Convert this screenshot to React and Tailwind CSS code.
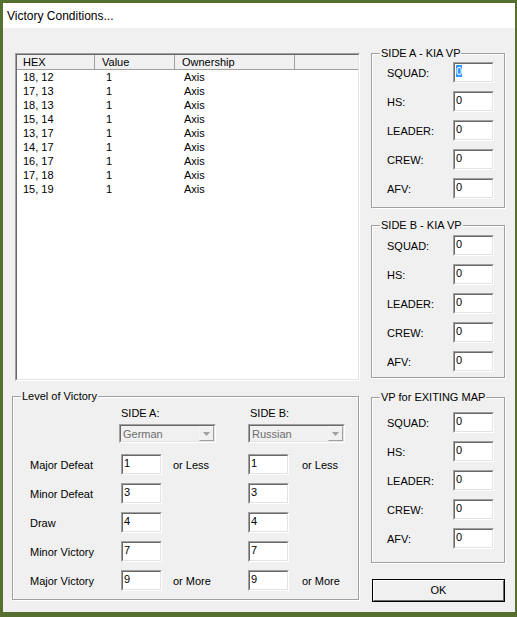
import React from "react";

const font = { fontFamily: '"Liberation Sans", Arial, sans-serif' };

const rows = [
  ["18, 12", "1", "Axis"],
  ["17, 13", "1", "Axis"],
  ["18, 13", "1", "Axis"],
  ["15, 14", "1", "Axis"],
  ["13, 17", "1", "Axis"],
  ["14, 17", "1", "Axis"],
  ["16, 17", "1", "Axis"],
  ["17, 18", "1", "Axis"],
  ["15, 19", "1", "Axis"],
];

function Sunken({ className = "", inner = "bg-white", children }) {
  return (
    <div className={`border border-t-[#a0a0a0] border-l-[#a0a0a0] border-b-white border-r-white ${className}`}>
      <div className={`w-full h-full border border-t-[#696969] border-l-[#696969] border-b-[#e3e3e3] border-r-[#e3e3e3] ${inner}`}>
        {children}
      </div>
    </div>
  );
}

function Field({ value, selected }) {
  return (
    <Sunken className="w-[41px] h-[21px] shrink-0">
      <div className="pl-[1px] pt-[1px] text-[11px] leading-[13px] text-black">
        {selected ? <span className="bg-[#3399ff] text-white">{value}</span> : value}
      </div>
    </Sunken>
  );
}

function Group({ title, className = "", children }) {
  return (
    <div className={`relative border border-[#a0a0a0] shadow-[inset_1px_1px_0_#fff,1px_1px_0_#fff] ${className}`}>
      <span className="absolute -top-[8px] left-[8px] bg-[#f0f0f0] px-[1px] text-[11px] leading-[14px] text-black">
        {title}
      </span>
      {children}
    </div>
  );
}

function VpGroup({ title, className, selectFirst }) {
  const labels = ["SQUAD:", "HS:", "LEADER:", "CREW:", "AFV:"];
  return (
    <Group title={title} className={className}>
      <div className="flex flex-col gap-[8px]">
        {labels.map((l, i) => (
          <div key={l} className="flex items-center">
            <span className="pl-[15px] w-[81px] text-[11px] leading-[14px]">{l}</span>
            <Field value="0" selected={selectFirst && i === 0} />
          </div>
        ))}
      </div>
    </Group>
  );
}

function Combo({ value }) {
  return (
    <Sunken className="w-[97px] h-[19px]" inner="bg-[#f0f0f0]">
      <div className="flex h-full items-center justify-between">
        <span className="pl-[2px] text-[11px] leading-[14px] text-[#6d6d6d]">{value}</span>
        <div className="w-[15px] h-[15px] border border-t-[#f4f4f4] border-l-[#f4f4f4] border-b-[#a0a0a0] border-r-[#a0a0a0] bg-[#f0f0f0] flex items-center justify-center">
          <svg width="7" height="4" viewBox="0 0 7 4">
            <path d="M0 0h7L3.5 4z" fill="#a0a0a0" />
          </svg>
        </div>
      </div>
    </Sunken>
  );
}

const levels = [
  ["Major Defeat", "1", "or Less"],
  ["Minor Defeat", "3", ""],
  ["Draw", "4", ""],
  ["Minor Victory", "7", ""],
  ["Major Victory", "9", "or More"],
];

export default function App() {
  return (
    <div className="w-[517px] h-[617px] bg-[#56702f] pt-[3px] pl-[3px] overflow-hidden" style={font}>
      <div className="w-[512px] h-[609px] bg-[#f0f0f0] flex flex-col text-black">
        <div className="h-[25px] bg-white flex items-center pl-[4px]">
          <span className="text-[12px]">Victory Conditions...</span>
        </div>

        <div className="flex pl-[9px] pt-[25px]">
          {/* left column */}
          <div className="w-[348px] flex flex-col">
            <Sunken className="ml-[3px] w-[345px] h-[328px]">
              <div className="flex h-[15px] bg-[#f0f0f0] border-b border-[#a0a0a0] text-[11px] leading-[14px]">
                <div className="w-[78px] pl-[6px] border-r border-[#a0a0a0]">HEX</div>
                <div className="w-[80px] pl-[7px] border-r border-[#a0a0a0]">Value</div>
                <div className="w-[120px] pl-[7px] border-r border-[#a0a0a0]">Ownership</div>
              </div>
              <div className="text-[11px] leading-[14px]">
                {rows.map((r, i) => (
                  <div key={i} className="flex">
                    <div className="w-[78px] pl-[6px]">{r[0]}</div>
                    <div className="w-[80px] pl-[11px]">{r[1]}</div>
                    <div className="w-[120px] pl-[9px]">{r[2]}</div>
                  </div>
                ))}
              </div>
            </Sunken>

            <Group title="Level of Victory" className="mt-[15px] w-[347px] h-[204px]">
              <div className="flex pl-[108px] pt-[9px] text-[11px] leading-[14px]">
                <span className="w-[129px]">SIDE A:</span>
                <span>SIDE B:</span>
              </div>
              <div className="flex gap-[32px] pl-[106px] mt-[4px]">
                <Combo value="German" />
                <Combo value="Russian" />
              </div>
              <div className="flex flex-col gap-[8px] mt-[11px]">
                {levels.map(([label, v, suffix]) => (
                  <div key={label} className="flex items-center text-[11px] leading-[14px]">
                    <span className="pl-[17px] w-[108px]">{label}</span>
                    <Field value={v} />
                    <span className="w-[86px] pl-[11px]">{suffix}</span>
                    <Field value={v} />
                    <span className="pl-[13px]">{suffix}</span>
                  </div>
                ))}
              </div>
            </Group>
          </div>

          {/* right column */}
          <div className="ml-[11px] w-[134px] flex flex-col">
            <VpGroup title="SIDE A - KIA VP" className="h-[155px] pt-[8px]" selectFirst />
            <VpGroup title="SIDE B - KIA VP" className="mt-[17px] h-[153px] pt-[9px]" />
            <VpGroup title="VP for EXITING MAP" className="mt-[19px] h-[166px] pt-[14px]" />
            <button className="mt-[16px] ml-[1px] w-[133px] h-[23px] border border-black bg-[#f0f0f0] p-0">
              <div className="w-full h-full border border-t-white border-l-white border-b-[#696969] border-r-[#696969] flex items-center justify-center text-[11px]">
                OK
              </div>
            </button>
          </div>
        </div>
      </div>
    </div>
  );
}
